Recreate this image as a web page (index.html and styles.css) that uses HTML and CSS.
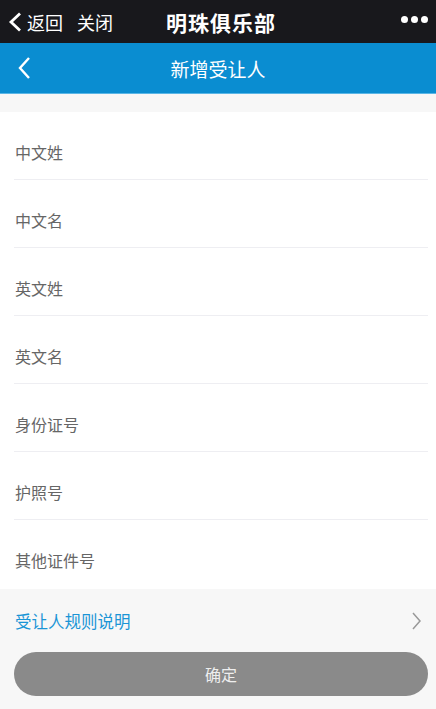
FILE: index.html
```html
<!DOCTYPE html>
<html lang="zh-CN">
<head>
<meta charset="UTF-8">
<meta name="viewport" content="width=device-width, initial-scale=1.0">
<title>明珠俱乐部</title>
<link rel="stylesheet" href="styles.css">
</head>
<body>

<!-- WECHAT BAR -->
<div class="wx-bar">
  <div class="wx-left">
    <svg class="wx-back" width="14" height="20" viewBox="0 0 14 20"><path d="M12 1.5 L3 10 L12 18.5" fill="none" stroke="#fff" stroke-width="2.8"/></svg>
    <span>返回</span>
    <span class="wx-close">关闭</span>
  </div>
  <div class="wx-title">明珠俱乐部</div>
  <div class="wx-more"><i></i><i></i><i></i></div>
</div>

<!-- PAGE HEADER -->
<div class="page-header">
  <svg class="back" width="14" height="22" viewBox="0 0 14 22"><path d="M12 1 L3 11 L12 21" fill="none" stroke="#fff" stroke-width="2.4"/></svg>
  <h1>新增受让人</h1>
</div>

<div class="gap"></div>

<!-- FORM -->
<div class="form">
  <div class="row"><input placeholder="中文姓"></div>
  <div class="row"><input placeholder="中文名"></div>
  <div class="row"><input placeholder="英文姓"></div>
  <div class="row"><input placeholder="英文名"></div>
  <div class="row"><input placeholder="身份证号"></div>
  <div class="row"><input placeholder="护照号"></div>
  <div class="row"><input placeholder="其他证件号"></div>
</div>

<div class="rules">
  <span>受让人规则说明</span>
  <svg width="10" height="18" viewBox="0 0 10 18"><path d="M1 1 L8 9 L1 17" fill="none" stroke="#999" stroke-width="1.5"/></svg>
</div>

<div class="actions">
  <button class="submit">确定</button>
</div>

</body>
</html>
```

FILE: styles.css
```css
body {
  margin: 0;
  font-family: "Noto Sans CJK SC", "Noto Sans", sans-serif;
  background: #f7f7f7;
}

/* WECHAT BAR */
.wx-bar {
  height: 43px;
  background: #18181c;
  color: #fff;
  display: flex;
  align-items: center;
  justify-content: space-between;
  padding: 0 8px 0 8px;
}

.wx-left {
  display: flex;
  align-items: center;
  font-size: 18px;
  width: 120px;
}

.wx-back { margin-right: 5px; }
.wx-close { margin-left: 14px; }

.wx-title {
  font-size: 21px;
  font-weight: bold;
  letter-spacing: 1px;
  margin-left: 6px;
}

.wx-more {
  width: 120px;
  display: flex;
  justify-content: flex-end;
  gap: 3px;
  margin-top: -4px;
}

.wx-more i {
  width: 7px;
  height: 7px;
  border-radius: 50%;
  background: #fff;
}

/* PAGE HEADER */
.page-header {
  height: 50px;
  background: #0a8dd1;
  display: flex;
  align-items: center;
  border-bottom: 1px solid #5ab6e6;
}

.page-header .back {
  margin-left: 17px;
}

.page-header h1 {
  flex: 1;
  margin: 0 31px 0 0;
  text-align: center;
  color: #fff;
  font-size: 19px;
  font-weight: normal;
}

.gap { height: 18px; }

/* FORM */
.form {
  background: #fff;
  padding: 0 8px 0 14px;
}

.row {
  height: 67px;
  border-bottom: 1px solid #eeeef2;
  display: flex;
  align-items: flex-end;
}

.row:last-child {
  border-bottom: none;
  height: 69px;
}

.row input {
  flex: 1;
  border: none;
  outline: none;
  font-family: inherit;
  font-size: 16px;
  height: 20px;
  line-height: 20px;
  padding: 0 0 0 1px;
  margin-bottom: 17px;
  background: transparent;
}

.row:last-child input { margin-bottom: 19px; }

.row input::placeholder { color: #666; }

/* RULES */
.rules {
  height: 63px;
  display: flex;
  align-items: center;
  justify-content: space-between;
  padding: 0 14px 0 15px;
  color: #1a95d6;
  font-size: 16.5px;
}

/* BUTTON */
.actions {
  padding: 0 8px 0 14px;
}

.submit {
  width: 100%;
  height: 44px;
  border: none;
  border-radius: 22px;
  background: #8a8a8a;
  color: #eee;
  font-family: inherit;
  font-size: 16px;
}
```
